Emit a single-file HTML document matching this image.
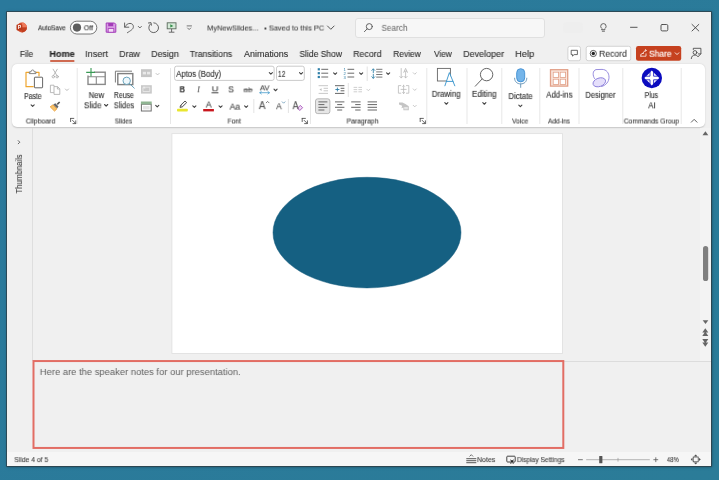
<!DOCTYPE html>
<html lang="en"><head><meta charset="utf-8"><title>PowerPoint - MyNewSlides</title>
<style>
html,body{margin:0;padding:0}
body{width:719px;height:480px;position:relative;overflow:hidden;background:#2b7b9b;font-family:"Liberation Sans",sans-serif}
.t{position:absolute;white-space:pre;transform-origin:0 50%;will-change:transform;-webkit-text-stroke:0.12px currentColor;}
.a{position:absolute}
svg.ov{position:absolute;left:0;top:0}

</style></head>
<body>
<div class="a" style="left:0;top:0;width:719px;height:480px;background:linear-gradient(135deg,#2a799c 0%,#2b7c98 100%)"></div>
<div class="a" id="win" style="left:7px;top:12px;width:704px;height:454px;background:#f0f0f0;box-shadow:0 0 0 0.8px rgba(48,62,70,.9),0 0 2.5px 0.5px rgba(20,40,50,.55)"></div>
<div class="a" id="search" style="left:354.5px;top:17.5px;width:190px;height:20px;background:#f7f7f7;border:1px solid #e0e0e0;border-radius:3px;box-sizing:border-box"></div>
<div class="a" id="ribbon" style="left:12px;top:64px;width:693px;height:63px;background:#fff;border-radius:5px;box-shadow:0 0.5px 1.5px rgba(0,0,0,.18)"></div>
<div class="a" id="leftline" style="left:32px;top:128px;width:1px;height:233px;background:#dedede"></div>
<div class="a" id="hline" style="left:33px;top:361px;width:678px;height:1px;background:#dcdcdc"></div>
<div class="a" id="status" style="left:7px;top:452px;width:704px;height:14px;background:#f6f6f6"></div>
<span class="t" style="left:19.6px;top:173.8px;font-size:8.2px;line-height:10px;color:#444;transform-origin:50% 50%;transform:translate(-50%,-50%) rotate(-90deg) scaleX(0.92)">Thumbnails</span>

<svg class="ov" width="719" height="480" viewBox="0 0 719 480" fill="none">
<rect x="171.900" y="133.600" width="390.600" height="219.900" fill="#fff" stroke="#e1e1e1" stroke-width="0.900"/>
<ellipse cx="367" cy="232.6" rx="94" ry="55.3" fill="#156082" stroke="#12587a" stroke-width="0.5"/>
<!-- ===== title bar ===== -->
<g id="ppt-logo">
<circle cx="21.900" cy="27.500" r="5" fill="#d5502f"/>
<path d="M21.900 22.500a5 5 0 0 1 5 5h-5z" fill="#ee7a5a"/>
<path d="M21.900 27.500h5a5 5 0 0 1-5 5z" fill="#c13f20"/>
<rect x="16.500" y="24.600" width="5.800" height="5.800" rx="0.800" fill="#b93a1c"/>
<text x="17.800" y="29.400" font-family="Liberation Sans, sans-serif" font-size="5.200" font-weight="700" fill="#fff">P</text>
</g>
<g id="toggle">
<rect x="70.4" y="21.2" width="26.4" height="12.8" rx="6.4" fill="#fdfdfd" stroke="#555" stroke-width="0.8"/>
<circle cx="77" cy="27.600" r="4.100" fill="#5e5e5e"/>
</g>
<g id="save">
<path d="M106.2 23h8.3l1.3 1.3v7.9h-9.6z" fill="#d79be3" stroke="#a33bb8" stroke-width="1"/>
<rect x="108.2" y="23" width="5" height="3.2" fill="#a33bb8"/>
<rect x="108.2" y="28.6" width="5.6" height="3.6" fill="#f3dcf7" stroke="#a33bb8" stroke-width="0.8"/>
</g>
<g id="undo" stroke="#555" stroke-width="0.9" stroke-linecap="round" stroke-linejoin="round">
<path d="M124.6 23v4.2h4.2"/>
<path d="M124.8 27c1.4-2.2 3-3.6 5.2-3.6 2 0 3.4 1.400 3.400 3.300 0 2.600-3 4-6 6"/>
<path d="M138.300 26.400l1.55 1.55 1.55-1.55" stroke-width="0.9"/>
</g>
<g id="redo" stroke="#555" stroke-width="0.9" stroke-linecap="round" stroke-linejoin="round">
<path d="M150.200 24.200a4.900 4.900 0 1 0 3.600-1.400"/>
<path d="M148.600 22.800h2.600v2.600" transform="rotate(-8 150 24)"/>
</g>
<g id="present">
<rect x="167.200" y="22.800" width="8.800" height="6" fill="#d5ead8" stroke="#5a6a5c" stroke-width="0.9"/>
<path d="M170.300 24.200l3 1.700-3 1.700z" fill="#2f8a46"/>
<path d="M171.600 28.800v3.200M168.800 32.200h5.600" stroke="#5a5a5a" stroke-width="0.9"/>
</g>
<g id="qat" stroke="#555" stroke-width="0.8" stroke-linecap="round" stroke-linejoin="round">
<path d="M187.100 25.900h4.400"/>
<path d="M187.600 28l1.55 1.55 1.55-1.55"/>
</g>
<path d="M327.500 26l3.300 3.300 3.300-3.300" stroke="#444" stroke-width="0.9" stroke-linecap="round" stroke-linejoin="round"/>
<g id="searchicon" stroke="#555" stroke-width="0.9" stroke-linecap="round">
<circle cx="369.300" cy="26.600" r="3"/>
<path d="M367.100 28.900l-2.700 2.800"/>
</g>

<rect x="563" y="22.500" width="20" height="10.500" rx="3" fill="#ececec" opacity="0.6"/>
<g id="winctl" stroke="#444" stroke-width="0.9" stroke-linecap="round" stroke-linejoin="round">
<path d="M601.900 28.500c-.9-.7-1.200-1.400-1.200-2.200a2.700 2.700 0 0 1 5.400 0c0 .8-.3 1.500-1.200 2.200v1.200h-3zM602.300 31.200h2.200" stroke-width="0.8"/>
<path d="M630.500 27.300h6.600"/>
<rect x="661" y="24.500" width="6.800" height="6.400" rx="1.200"/>
<path d="M692 24.400l6.800 6.600M698.800 24.400l-6.800 6.600"/>
</g>
<g id="rbtns">
<rect x="567.900" y="46.300" width="12.600" height="14.400" rx="2" fill="#fff" stroke="#c9c9c9" stroke-width="0.8"/>
<path d="M571.200 50.300h6.200v4.300h-3.300l-1.600 1.500v-1.500h-1.300z" stroke="#444" stroke-width="0.8" stroke-linejoin="round"/>
<rect x="586.200" y="46.300" width="44.500" height="14.400" rx="2" fill="#fff" stroke="#c9c9c9" stroke-width="0.8"/>
<circle cx="593.300" cy="53.500" r="3.100" stroke="#333" stroke-width="0.8"/>
<circle cx="593.300" cy="53.500" r="1.700" fill="#222"/>
<rect x="636" y="46" width="45.200" height="14.800" rx="2.200" fill="#c6411f"/>
<path d="M640.800 56.200v-1.900l2.800-1.300M640.800 56.200h5.200v-2.400M643 53.600c.4-2 1.500-3 3.300-3.200l-.9-.9M646.300 50.400l-.9 1" stroke="#fff" stroke-width="0.75" stroke-linecap="round" stroke-linejoin="round"/>
<path d="M675.200 52.800l1.800 1.800 1.800-1.800" stroke="#fff" stroke-width="0.85" stroke-linecap="round" stroke-linejoin="round"/>
<g stroke="#444" stroke-width="0.85" stroke-linecap="round" stroke-linejoin="round">
<circle cx="695" cy="52.500" r="1.900"/>
<path d="M691.300 58.600c.2-2.400 1.600-3.500 3.700-3.500 1.300 0 2.300.5 2.900 1.400"/>
<path d="M693.300 49.500v-1.200h7.600v5.600h-2.600"/>
<path d="M698.200 56.600l2.500-2.600"/>
</g>
</g>
<rect x="50" y="60.200" width="24.600" height="1.600" rx="0.8" fill="#c43e1c"/>

<!-- ===== ribbon: clipboard ===== -->
<g id="paste">
<path d="M29.200 72.300h-3.200v14.400h7.600M36 72.300h3v4" stroke="#efa62f" stroke-width="1.200" stroke-linejoin="round"/>
<path d="M29.300 73.600v-1.700h1.700c0-1.300.7-1.900 1.600-1.900s1.600.6 1.600 1.900h1.700v1.700z" stroke="#666" stroke-width="0.800" stroke-linejoin="round" fill="#fff"/>
<rect x="34.400" y="77.200" width="8.200" height="10.600" rx="0.600" fill="#fff" stroke="#555" stroke-width="0.900"/>
<path d="M31.100 104.800l1.55 1.55 1.55-1.55" stroke="#444" stroke-width="1.1" stroke-linecap="round" stroke-linejoin="round"/>
</g>
<g id="cut" stroke="#a9a9a9" stroke-width="0.800" stroke-linecap="round">
<path d="M53.100 69.200l3.700 6.200M57.300 69.200l-3.700 6.200"/>
<circle cx="53.300" cy="76.700" r="1.200"/><circle cx="57.100" cy="76.700" r="1.200"/>
</g>
<g id="copy" stroke="#a9a9a9" stroke-width="0.800" stroke-linejoin="round">
<path d="M54 86.600v-1.400h-3.600v7.400h3.400"/>
<path d="M54 86.600h3.600l2.200 2.200v5.600h-5.800z" fill="#fff"/>
<path d="M57.400 86.800v2.200h2.200"/>
<path d="M65.400 89l1.55 1.55 1.55-1.55" stroke-linecap="round"/>
</g>
<g id="fpaint">
<path d="M52.900 104.900l4 4-2.400 2.200-4.300-4.300z" fill="#f6c36b" stroke="#e8962a" stroke-width="0.800" stroke-linejoin="round"/>
<path d="M53.200 104.600l2.200-1.300 3.100 3.100-1.300 2.200z" fill="#666"/>
<path d="M56.700 103.800l2.400-2.400 1.100 1.100-2.400 2.400z" fill="#555"/>
</g>
<path d="M70.600 118.400h3.200M70.600 118.400v3.200M72.600 120.400l3 3M75.800 120.800v2.800h-2.800" stroke="#4a4a4a" stroke-width="0.850" stroke-linecap="round" stroke-linejoin="round"/>

<!-- ===== ribbon: slides ===== -->
<g id="newslide">
<rect x="88" y="72.200" width="17.200" height="12.200" stroke="#8a8a8a" stroke-width="1.400"/>
<path d="M88 76.800h17.200M96.300 76.800v7.600" stroke="#8a8a8a" stroke-width="1.100"/>
<rect x="85.500" y="67.500" width="8.500" height="8" fill="#fff"/>
<path d="M91 68v8.600M86.200 72.400h8.800" stroke="#3a9a55" stroke-width="1.100"/>
<path d="M104.600 104.500l1.55 1.55 1.55-1.55" stroke="#444" stroke-width="1.1" stroke-linecap="round" stroke-linejoin="round"/>
</g>
<g id="reuse">
<path d="M115.400 82.500v-11.300h16.600" stroke="#6e6e6e" stroke-width="0.900"/>
<rect x="117.800" y="73.600" width="15" height="11" stroke="#808080" stroke-width="1.400"/>
<circle cx="126.700" cy="80.800" r="3.700" fill="#eef7fb" stroke="#5b9bb5" stroke-width="0.900"/>
<path d="M129.500 83.600l4.800 4.600" stroke="#5b9bb5" stroke-width="0.900" stroke-linecap="round"/>
</g>
<g id="layout">
<rect x="141" y="69.200" width="10.800" height="7.900" fill="#c6c6c6"/>
<rect x="142.800" y="71.800" width="3.200" height="2.600" fill="#e9e9e9"/><rect x="147" y="71.800" width="3.200" height="2.600" fill="#e9e9e9"/>
<path d="M156 73.400l1.55 1.55 1.55-1.55" stroke="#b5b5b5" stroke-width="0.800" stroke-linecap="round" stroke-linejoin="round"/>
<rect x="141" y="85.200" width="10.800" height="8.400" fill="#c9c9c9"/>
<path d="M143 91.500v-4.300h6.800v4.300zM143 88.600l1.600-1.600M143.200 87.200h1.600v1.600" stroke="#ececec" stroke-width="0.800"/>
</g>
<g id="section">
<rect x="141.400" y="104.200" width="9.800" height="6.800" stroke="#6f6f6f" stroke-width="1"/>
<rect x="140.900" y="101.500" width="10.800" height="2.800" fill="#8fb592"/>
<rect x="143" y="106" width="6.600" height="3.400" fill="#e6e6e6"/>
<path d="M155.700 105.300l1.55 1.55 1.55-1.55" stroke="#444" stroke-width="1.1" stroke-linecap="round" stroke-linejoin="round"/>
</g>

<!-- ===== ribbon: font ===== -->
<g id="fontboxes">
<rect x="174.600" y="66.200" width="99.500" height="14.200" rx="2" fill="#fff" stroke="#bdbdbd" stroke-width="0.800"/>
<rect x="276.500" y="66.200" width="27.800" height="14.200" rx="2" fill="#fff" stroke="#bdbdbd" stroke-width="0.800"/>
<path d="M269.300 72.600l1.55 1.55 1.55-1.55M299.500 72.600l1.55 1.55 1.55-1.55" stroke="#444" stroke-width="1.1" stroke-linecap="round" stroke-linejoin="round"/>
</g>
<g id="fontrow2">
<path d="M259.800 92.700h9.600M261.300 91.500l-1.500 1.200 1.500 1.200M267.900 91.500l1.500 1.200-1.500 1.200" stroke="#3d97c9" stroke-width="0.750" stroke-linecap="round" stroke-linejoin="round"/>
<path d="M274 89.200l1.55 1.55 1.55-1.55" stroke="#444" stroke-width="1.1" stroke-linecap="round" stroke-linejoin="round"/>
</g>
<g id="fontrow3">
<rect x="177" y="108.800" width="10.800" height="2.700" rx="0.800" fill="#e9e62f"/>
<path d="M180 107.400l.6-2.100 4.400-4.300 1.700 1.600-4.400 4.300z" stroke="#4a4a4a" stroke-width="0.950" stroke-linejoin="round" fill="#f4f4f4"/><path d="M180.900 105.200l1.600 1.600" stroke="#4a4a4a" stroke-width="0.700"/>
<path d="M192.800 105.800l1.55 1.55 1.55-1.55M219 105.800l1.55 1.55 1.55-1.55M244.600 105.800l1.55 1.55 1.55-1.55" stroke="#444" stroke-width="1.1" stroke-linecap="round" stroke-linejoin="round"/>
<rect x="203.200" y="109" width="10.700" height="2.400" fill="#c9171e"/>
<path d="M253.800 99v14M288.400 99v14" stroke="#dcdcdc" stroke-width="0.800"/>
<path d="M266.200 102.800l1.400-1.400 1.400 1.400" stroke="#555" stroke-width="0.750" stroke-linecap="round" stroke-linejoin="round"/>
<path d="M282.200 101.800l1.400 1.400 1.400-1.400" stroke="#5a8fb0" stroke-width="0.750" stroke-linecap="round" stroke-linejoin="round"/>
<path d="M297.500 108.200l2.800-2.800 2.300 2.300-2.800 2.800z" stroke="#9a3fb0" stroke-width="0.800" stroke-linejoin="round" fill="#f0d8f5"/>
</g>
<path d="M302.200 118.400h3.200M302.200 118.400v3.200M304.200 120.400l3 3M307.400 120.800v2.800h-2.800" stroke="#4a4a4a" stroke-width="0.850" stroke-linecap="round" stroke-linejoin="round"/>
<path d="M420.200 118.400h3.200M420.200 118.400v3.200M422.200 120.400l3 3M425.400 120.800v2.800h-2.800" stroke="#4a4a4a" stroke-width="0.850" stroke-linecap="round" stroke-linejoin="round"/>
<!-- group separators -->
<path d="M77.200 68v56M170.500 68v56M310.500 68v56M426.800 68v56M467 68v56M501.800 68v56M539.800 68v56M579 68v56M622.800 68v56M681.200 68v56" stroke="#e4e4e4" stroke-width="0.900"/>

<!-- ===== ribbon: paragraph ===== -->
<g id="para">
<rect x="317.700" y="68.2" width="2.200" height="2.200" fill="#2e7fa8"/><rect x="317.700" y="72.1" width="2.200" height="2.200" fill="#2e7fa8"/><rect x="317.700" y="75.9" width="2.200" height="2.200" fill="#2e7fa8"/><path d="M321.3 69.3H328.2M321.3 73.2H328.2M321.3 77.0H328.2" stroke="#6a6a6a" stroke-width="1.0"/><path d="M333.6 72.8l1.55 1.55 1.55-1.55" stroke="#444" stroke-width="1.1" stroke-linecap="round" stroke-linejoin="round"/><text x="343.600" y="70.900" font-family="Liberation Sans, sans-serif" font-size="4.200" fill="#2e7fa8">1</text><text x="343.600" y="74.800" font-family="Liberation Sans, sans-serif" font-size="4.200" fill="#2e7fa8">2</text><text x="343.600" y="78.600" font-family="Liberation Sans, sans-serif" font-size="4.200" fill="#2e7fa8">3</text><path d="M347.5 69.3H354.2M347.5 73.2H354.2M347.5 77.0H354.2" stroke="#6a6a6a" stroke-width="1.0"/><path d="M359.6 72.8l1.55 1.55 1.55-1.55" stroke="#444" stroke-width="1.1" stroke-linecap="round" stroke-linejoin="round"/><path d="M367.200 66.500v14.500M348.300 83v14" stroke="#dcdcdc" stroke-width="0.800"/><path d="M373.300 69v3.800M371.800 70.400l1.500-1.500 1.500 1.500M373.300 74.400v3.800M371.800 76.800l1.500 1.500 1.500-1.500" stroke="#2e7fa8" stroke-width="0.850" stroke-linecap="round" stroke-linejoin="round"/><path d="M376.2 69.3H382.4M376.2 71.9H382.4M376.2 74.5H382.4M376.2 77.1H382.4" stroke="#6a6a6a" stroke-width="0.9"/><path d="M386.6 72.8l1.55 1.55 1.55-1.55" stroke="#444" stroke-width="1.1" stroke-linecap="round" stroke-linejoin="round"/><g stroke="#b9b9b9" stroke-width="0.800" stroke-linecap="round" stroke-linejoin="round"><path d="M401.200 68.500v9.300M399.700 76.400l1.55 1.55 1.55-1.55M405.600 72v5.800M404.100 76.400l1.55 1.55 1.55-1.55M403.800 72.400l1.800-4 1.800 4M404.400 71.200h2.400"/><path d="M400.800 85.600h-2.400v7.600h2.400M406.400 85.600h2.400v7.600h-2.400M403.600 85.200v8.400M401 89.400h5.200M402.600 86.400l1-1 1 1M402.600 92.400l1 1 1-1"/></g><path d="M413.2 72.7l1.55 1.55 1.55-1.55" stroke="#bdbdbd" stroke-width="0.8" stroke-linecap="round" stroke-linejoin="round"/><path d="M413.2 88.9l1.55 1.55 1.55-1.55" stroke="#bdbdbd" stroke-width="0.8" stroke-linecap="round" stroke-linejoin="round"/><path d="M413.2 105.3l1.55 1.55 1.55-1.55" stroke="#bdbdbd" stroke-width="0.8" stroke-linecap="round" stroke-linejoin="round"/><path d="M399 102.400h3.400l3 1.600 3.400 2.200v4h-5.400v-2.800l-2 .8.800-2.400-3.200-1.400z" fill="#c4c4c4"/><rect x="404.200" y="107" width="3.600" height="2.400" fill="#e6e6e6"/><path d="M318.6 85.7H328.0M318.6 93.4H328.0M323.6 88.3H328.0M323.6 90.8H328.0" stroke="#c2c2c2" stroke-width="0.9"/><path d="M321.600 88.200l-2.200 1.400 2.200 1.400z" fill="#c2c2c2"/><path d="M335.0 85.7H344.4M335.0 93.4H344.4M340.6 88.3H344.4M340.6 90.8H344.4" stroke="#666" stroke-width="1.0"/><path d="M335.400 89.500h4M337.400 87.600v3.800" stroke="#2e7fa8" stroke-width="0.900"/><path d="M353.6 87.4H357.2M358.4 87.4H362.0M353.6 89.6H357.2M358.4 89.6H362.0M353.6 91.8H357.2M358.4 91.8H362.0" stroke="#c9c9c9" stroke-width="0.9"/><path d="M366.8 89.2l1.55 1.55 1.55-1.55" stroke="#c4c4c4" stroke-width="0.8" stroke-linecap="round" stroke-linejoin="round"/><rect x="315.500" y="98.800" width="14.400" height="14.800" rx="2.200" fill="#e6e6e6" stroke="#a8a8a8" stroke-width="0.800"/><path d="M318.4 101.9H327.4M318.4 104.6H324.4M318.4 107.3H327.4M318.4 110.0H324.4" stroke="#666" stroke-width="1.0"/><path d="M335.0 101.9H344.4M337.2 104.6H342.2M335.0 107.3H344.4M337.2 110.0H342.2" stroke="#666" stroke-width="1.0"/><path d="M351.2 101.9H360.6M355.2 104.6H360.6M351.2 107.3H360.6M355.2 110.0H360.6" stroke="#666" stroke-width="1.0"/><path d="M367.6 101.9H377.0M367.6 104.6H377.0M367.6 107.3H377.0M367.6 110.0H377.0" stroke="#666" stroke-width="1.0"/>
</g>

<!-- ===== ribbon: big buttons ===== -->
<g id="bigbtns">
<rect x="437.400" y="68.400" width="13" height="12.600" stroke="#666" stroke-width="0.900"/><path d="M445 85.600l4.400-12.600 5.200 12.600z" fill="#fff" stroke="none"/><path d="M444.900 85.800l4.500-13.200 5.400 13.200M446.400 81.400h6.600" stroke="#3b97cd" stroke-width="0.950" stroke-linejoin="round" stroke-linecap="round"/><path d="M444.8 102.7l1.55 1.55 1.55-1.55" stroke="#444" stroke-width="1.1" stroke-linecap="round" stroke-linejoin="round"/><circle cx="486.600" cy="74.600" r="6.200" stroke="#555" stroke-width="0.900"/><path d="M482.100 79l-6.800 7.200" stroke="#555" stroke-width="0.900" stroke-linecap="round"/><path d="M482.8 102.7l1.55 1.55 1.55-1.55" stroke="#444" stroke-width="1.1" stroke-linecap="round" stroke-linejoin="round"/><rect x="516.700" y="68.700" width="8" height="13.200" rx="4" fill="#74b5ea" stroke="#3f8fd2" stroke-width="0.900"/><path d="M514.600 78.200c0 3.600 2.600 5.700 6.100 5.700s6.100-2.100 6.100-5.700M520.700 84v3.400" stroke="#5e8eb3" stroke-width="0.900" stroke-linecap="round"/><path d="M518.8 105.1l1.55 1.55 1.55-1.55" stroke="#444" stroke-width="1.1" stroke-linecap="round" stroke-linejoin="round"/><rect x="550.500" y="69.700" width="17.200" height="16.400" fill="#f9e6dd" stroke="#e2a088" stroke-width="1.300"/><rect x="553.2" y="72.2" width="5.400" height="5.200" fill="#fff" stroke="#e2a088" stroke-width="0.800"/><rect x="560.2" y="72.2" width="5.400" height="5.200" fill="#fff" stroke="#e2a088" stroke-width="0.800"/><rect x="553.2" y="79.2" width="5.400" height="5.200" fill="#fff" stroke="#e2a088" stroke-width="0.800"/><rect x="560.2" y="79.2" width="5.400" height="5.200" fill="#fff" stroke="#e2a088" stroke-width="0.800"/><path d="M594.600 78.600C592.400 75.600 592.500 70.600 596 69.600L602 69.400C606.500 69.400 609 73 609 77.200C609 81.600 606.200 85.300 601.600 86.500" stroke="#8c80da" stroke-width="0.900" stroke-linecap="round" fill="none"/><ellipse cx="599.300" cy="82.300" rx="6.500" ry="4.200" transform="rotate(-20 599.3 82.3)" fill="#e5dffb" stroke="#8c80da" stroke-width="0.900"/><circle cx="651.8" cy="78.0" r="10.200" fill="#0b0bbf"/><path d="M651.80 70.50Q655.30 74.50 659.30 78.00Q655.30 81.50 651.80 85.50Q648.30 81.50 644.30 78.00Q648.30 74.50 651.80 70.50z" fill="#fff"/><path d="M653.60 72.00V76.20H657.80M653.60 84.00V79.80H657.80M650.00 84.00V79.80H645.80M650.00 72.00V76.20H645.80" stroke="#0b0bbf" stroke-width="0.800" fill="none"/><path d="M691.300 122.200l2.850-2.850 2.850 2.850" stroke="#444" stroke-width="0.850" stroke-linecap="round" stroke-linejoin="round"/>
</g>

<!-- ===== status bar / scrollbar / left panel ===== -->
<g id="statusicons">
<path d="M469.800 456.200l1.500-1.500 1.500 1.500" stroke="#444" stroke-width="0.750" stroke-linecap="round" stroke-linejoin="round"/><path d="M466.300 458.700h10M466.300 460.700h10M466.300 462.700h10" stroke="#444" stroke-width="0.900"/><rect x="506.800" y="456.200" width="8.400" height="5.800" rx="0.800" stroke="#3a3a3a" stroke-width="0.950"/><rect x="510" y="459.400" width="4" height="4.600" fill="#f6f6f6"/><path d="M510.800 463.600l1.200-3.400 1.200 3.400M511 461.800h2.100M510.400 460l3.200 2.200M513.600 460l-3.200 2.200" stroke="#222" stroke-width="0.750" stroke-linecap="round"/><path d="M578 459.700h4.800" stroke="#555" stroke-width="0.800"/><path d="M586.200 459.700h63.600" stroke="#8a8a8a" stroke-width="0.600"/><path d="M618 457.900v3.700" stroke="#8a8a8a" stroke-width="0.600"/><rect x="599.200" y="456" width="3.200" height="7.200" rx="0.500" fill="#555"/><path d="M653.400 459.700h4.800M655.800 457.300v4.800" stroke="#555" stroke-width="0.800"/><rect x="693.200" y="457" width="5" height="4.800" stroke="#444" stroke-width="0.750"/><path d="M694.400 456.200l1.300-1.500 1.300 1.500zM694.400 462.700l1.300 1.500 1.300-1.500zM692.300 458.200l-1.400 1.200 1.400 1.200zM699.100 458.200l1.400 1.200-1.400 1.200z" fill="#444" stroke="#444" stroke-width="0.400" stroke-linejoin="round"/>
</g>
<g id="vscroll"><rect x="700" y="128" width="11" height="233" fill="#f3f3f3"/><path d="M702.500 135.200l2.900-4 2.900 4z" fill="#666"/><rect x="703" y="246" width="5.200" height="35" rx="2.600" fill="#808080"/><path d="M702.700 320.200h5.600l-2.800 3.900z" fill="#666"/>
<path d="M702.300 332.600l3-4.300 3 4.300zM702.300 335.900l3-4.300 3 4.300z" fill="#666"/>
<path d="M702.300 339.100h6l-3 4.300zM702.300 342.400h6l-3 4.300z" fill="#666"/>
</g>
<path d="M18.200 140.600l1.600 1.600-1.600 1.600" stroke="#555" stroke-width="0.900" stroke-linecap="round" stroke-linejoin="round"/>
<rect x="33.500" y="361.050" width="529.800" height="86.900" stroke="#e26d64" stroke-width="2"/>
</svg>

<span class="t" style="left:38px;top:23px;font-size:7.6px;line-height:9.12px;transform:translate(0.00px,0.30px) scaleX(0.8397) rotate(0.03deg);color:#2e2e2e;">AutoSave</span>
<span class="t" style="left:83px;top:23px;font-size:7.6px;line-height:9.12px;transform:translate(0.77px,0.30px) scaleX(0.9231) rotate(0.03deg);color:#2e2e2e;">Off</span>
<span class="t" style="left:207px;top:23px;font-size:7.9px;line-height:9.48px;transform:translate(0.13px,0.50px) scaleX(0.9465) rotate(0.03deg);color:#3a3a3a;-webkit-text-stroke:0.08px #3a3a3a;">MyNewSlides...</span>
<span class="t" style="left:264px;top:23px;font-size:7.9px;line-height:9.48px;transform:translate(0.16px,0.50px) scaleX(0.9423) rotate(0.03deg);color:#3a3a3a;-webkit-text-stroke:0.08px #3a3a3a;">• Saved to this PC</span>
<span class="t" style="left:381px;top:22px;font-size:8.4px;line-height:10.08px;transform:translate(0.51px,0.87px) scaleX(0.9804) rotate(0.03deg);color:#606060;-webkit-text-stroke:0;">Search</span>
<span class="t" style="left:19px;top:48px;font-size:8.8px;line-height:10.56px;transform:translate(0.89px,0.98px) scaleX(0.9434) rotate(0.03deg);color:#2e2e2e;">File</span>
<span class="t" style="left:49px;top:48px;font-size:8.8px;line-height:10.56px;transform:translate(0.48px,0.94px) scaleX(1.0316) rotate(0.03deg);color:#222;font-weight:700;">Home</span>
<span class="t" style="left:85px;top:48px;font-size:8.8px;line-height:10.56px;transform:translate(0.22px,0.98px) scaleX(1.0353) rotate(0.03deg);color:#2e2e2e;">Insert</span>
<span class="t" style="left:119px;top:48px;font-size:8.8px;line-height:10.56px;transform:translate(0.24px,0.98px) scaleX(1.0127) rotate(0.03deg);color:#2e2e2e;">Draw</span>
<span class="t" style="left:151px;top:48px;font-size:8.8px;line-height:10.56px;transform:translate(0.24px,0.98px) scaleX(1.0095) rotate(0.03deg);color:#2e2e2e;">Design</span>
<span class="t" style="left:189px;top:48px;font-size:8.8px;line-height:10.56px;transform:translate(0.75px,0.98px) scaleX(0.9941) rotate(0.03deg);color:#2e2e2e;">Transitions</span>
<span class="t" style="left:244px;top:48px;font-size:8.8px;line-height:10.56px;transform:translate(0.00px,0.98px) scaleX(1.0173) rotate(0.03deg);color:#2e2e2e;">Animations</span>
<span class="t" style="left:299px;top:48px;font-size:8.8px;line-height:10.56px;transform:translate(0.52px,0.98px) scaleX(0.9655) rotate(0.03deg);color:#2e2e2e;">Slide Show</span>
<span class="t" style="left:353px;top:48px;font-size:8.8px;line-height:10.56px;transform:translate(0.25px,0.98px) scaleX(1.0000) rotate(0.03deg);color:#2e2e2e;">Record</span>
<span class="t" style="left:393px;top:48px;font-size:8.8px;line-height:10.56px;transform:translate(0.28px,0.98px) scaleX(0.9558) rotate(0.03deg);color:#2e2e2e;">Review</span>
<span class="t" style="left:434px;top:48px;font-size:8.8px;line-height:10.56px;transform:translate(0.00px,0.98px) scaleX(0.9474) rotate(0.03deg);color:#2e2e2e;">View</span>
<span class="t" style="left:463px;top:48px;font-size:8.8px;line-height:10.56px;transform:translate(0.24px,0.98px) scaleX(1.0191) rotate(0.03deg);color:#2e2e2e;">Developer</span>
<span class="t" style="left:515px;top:48px;font-size:8.8px;line-height:10.56px;transform:translate(0.21px,0.99px) scaleX(1.0588) rotate(0.03deg);color:#2e2e2e;">Help</span>
<span class="t" style="left:599px;top:48px;font-size:9.0px;line-height:10.8px;transform:translate(0.08px,0.78px) scaleX(0.9586) rotate(0.03deg);color:#2a2a2a;-webkit-text-stroke:0.05px #2a2a2a;">Record</span>
<span class="t" style="left:649px;top:48px;font-size:9.0px;line-height:10.8px;transform:translate(0.13px,0.74px) scaleX(0.9304) rotate(0.03deg);color:#fff;-webkit-text-stroke:0.15px #fff;">Share</span>
<span class="t" style="left:24px;top:92px;font-size:8.2px;line-height:9.84px;transform:translate(0.19px,0.08px) scaleX(0.8296) rotate(0.03deg);color:#2e2e2e;">Paste</span>
<span class="t" style="left:88px;top:91px;font-size:8.2px;line-height:9.84px;transform:translate(0.73px,0.08px) scaleX(0.9375) rotate(0.03deg);color:#2e2e2e;">New</span>
<span class="t" style="left:84px;top:101px;font-size:8.2px;line-height:9.84px;transform:translate(0.02px,0.28px) scaleX(0.9600) rotate(0.03deg);color:#2e2e2e;">Slide</span>
<span class="t" style="left:113px;top:91px;font-size:8.2px;line-height:9.84px;transform:translate(0.88px,0.08px) scaleX(0.8478) rotate(0.03deg);color:#2e2e2e;">Reuse</span>
<span class="t" style="left:113px;top:101px;font-size:8.2px;line-height:9.84px;transform:translate(0.85px,0.28px) scaleX(0.9070) rotate(0.03deg);color:#2e2e2e;">Slides</span>
<span class="t" style="left:431px;top:89px;font-size:8.2px;line-height:9.84px;transform:translate(0.82px,0.87px) scaleX(0.9552) rotate(0.03deg);color:#2e2e2e;">Drawing</span>
<span class="t" style="left:471px;top:89px;font-size:8.2px;line-height:9.84px;transform:translate(0.91px,0.88px) scaleX(0.9833) rotate(0.03deg);color:#2e2e2e;">Editing</span>
<span class="t" style="left:508px;top:92px;font-size:8.2px;line-height:9.84px;transform:translate(0.42px,0.08px) scaleX(0.9535) rotate(0.03deg);color:#2e2e2e;">Dictate</span>
<span class="t" style="left:546px;top:90px;font-size:8.2px;line-height:9.84px;transform:translate(0.30px,0.68px) scaleX(0.9455) rotate(0.03deg);color:#2e2e2e;">Add-ins</span>
<span class="t" style="left:585px;top:90px;font-size:8.2px;line-height:9.84px;transform:translate(0.44px,0.87px) scaleX(0.9178) rotate(0.03deg);color:#2e2e2e;">Designer</span>
<span class="t" style="left:644px;top:91px;font-size:8.2px;line-height:9.84px;transform:translate(0.57px,0.08px) scaleX(0.8525) rotate(0.03deg);color:#2e2e2e;">Plus</span>
<span class="t" style="left:648px;top:101px;font-size:8.2px;line-height:9.84px;transform:translate(0.30px,0.38px) scaleX(0.9571) rotate(0.03deg);color:#2e2e2e;">AI</span>
<span class="t" style="left:25px;top:117px;font-size:7.4px;line-height:8.88px;transform:translate(0.77px,0.50px) scaleX(0.9355) rotate(0.03deg);color:#3a3a3a;">Clipboard</span>
<span class="t" style="left:114px;top:117px;font-size:7.4px;line-height:8.88px;transform:translate(0.78px,0.50px) scaleX(0.8608) rotate(0.03deg);color:#3a3a3a;">Slides</span>
<span class="t" style="left:227px;top:117px;font-size:7.4px;line-height:8.88px;transform:translate(0.54px,0.50px) scaleX(0.9123) rotate(0.03deg);color:#3a3a3a;">Font</span>
<span class="t" style="left:346px;top:117px;font-size:7.4px;line-height:8.88px;transform:translate(0.54px,0.50px) scaleX(0.9254) rotate(0.03deg);color:#3a3a3a;">Paragraph</span>
<span class="t" style="left:512px;top:117px;font-size:7.4px;line-height:8.88px;transform:translate(0.00px,0.50px) scaleX(0.9014) rotate(0.03deg);color:#3a3a3a;">Voice</span>
<span class="t" style="left:548px;top:117px;font-size:7.4px;line-height:8.88px;transform:translate(0.00px,0.50px) scaleX(0.8800) rotate(0.03deg);color:#3a3a3a;">Add-ins</span>
<span class="t" style="left:623px;top:117px;font-size:7.4px;line-height:8.88px;transform:translate(0.77px,0.50px) scaleX(0.9167) rotate(0.03deg);color:#3a3a3a;">Commands Group</span>
<span class="t" style="left:176px;top:68px;font-size:8.4px;line-height:10.08px;transform:translate(0.20px,0.88px) scaleX(0.9292) rotate(0.03deg);color:#2e2e2e;">Aptos (Body)</span>
<span class="t" style="left:277px;top:68px;font-size:8.4px;line-height:10.08px;transform:translate(0.89px,0.88px) scaleX(0.8118) rotate(0.03deg);color:#2e2e2e;">12</span>
<span class="t" style="left:179px;top:84px;font-size:8.4px;line-height:10.08px;transform:translate(0.54px,0.34px) scaleX(0.9143) rotate(0.03deg);color:#333;font-weight:700;">B</span>
<span class="t" style="left:197px;top:84px;font-size:8.6px;line-height:10.32px;transform:translate(0.40px,0.32px) scaleX(0.8615) rotate(0.03deg);color:#444;font-style:italic;font-family:'Liberation Serif',serif;">I</span>
<span class="t" style="left:211px;top:84px;font-size:8.0px;line-height:9.6px;transform:translate(0.61px,0.30px) scaleX(1.1789) rotate(0.03deg);color:#444;text-decoration:underline;text-underline-offset:0.5px;">U</span>
<span class="t" style="left:228px;top:84px;font-size:8.8px;line-height:10.56px;transform:translate(0.21px,0.38px) scaleX(0.9800) rotate(0.03deg);color:#444;">S</span>
<span class="t" style="left:243px;top:85px;font-size:7.8px;line-height:9.36px;transform:translate(0.54px,0.30px) scaleX(1.0424) rotate(0.03deg);color:#6a6a6a;text-decoration:line-through;">ab</span>
<span class="t" style="left:259px;top:83px;font-size:7.8px;line-height:9.36px;transform:translate(0.90px,0.40px) scaleX(0.9846) rotate(0.03deg);color:#444;">AV</span>
<span class="t" style="left:205px;top:99px;font-size:8.8px;line-height:10.56px;transform:translate(0.80px,0.58px) scaleX(1.0000) rotate(0.03deg);color:#444;">A</span>
<span class="t" style="left:229px;top:101px;font-size:8.8px;line-height:10.56px;transform:translate(0.60px,0.68px) scaleX(0.9953) rotate(0.03deg);color:#444;">Aa</span>
<span class="t" style="left:258px;top:100px;font-size:10.4px;line-height:12.48px;transform:translate(0.80px,0.11px) scaleX(0.9714) rotate(0.03deg);color:#555;">A</span>
<span class="t" style="left:276px;top:102px;font-size:8.2px;line-height:9.84px;transform:translate(0.20px,0.28px) scaleX(1.0364) rotate(0.03deg);color:#555;">A</span>
<span class="t" style="left:292px;top:100px;font-size:10.4px;line-height:12.48px;transform:translate(0.60px,0.20px) scaleX(0.8714) rotate(0.03deg);color:#555;">A</span>
<span class="t" style="left:39px;top:366px;font-size:8.8px;line-height:10.56px;transform:translate(0.80px,0.96px) scaleX(1.0695) rotate(0.03deg);color:#606060;-webkit-text-stroke:0;">Here are the speaker notes for our presentation.</span>
<span class="t" style="left:14px;top:456px;font-size:6.9px;line-height:8.28px;transform:translate(0.36px,0.10px) scaleX(0.9794) rotate(0.03deg);color:#444;">Slide 4 of 5</span>
<span class="t" style="left:477px;top:456px;font-size:6.9px;line-height:8.28px;transform:translate(0.09px,0.10px) scaleX(1.0145) rotate(0.03deg);color:#444;">Notes</span>
<span class="t" style="left:516px;top:456px;font-size:6.9px;line-height:8.28px;transform:translate(0.92px,0.10px) scaleX(0.9641) rotate(0.03deg);color:#444;">Display Settings</span>
<span class="t" style="left:666px;top:456px;font-size:6.9px;line-height:8.28px;transform:translate(0.90px,0.10px) scaleX(0.8582) rotate(0.03deg);color:#444;">48%</span>
</body></html>
